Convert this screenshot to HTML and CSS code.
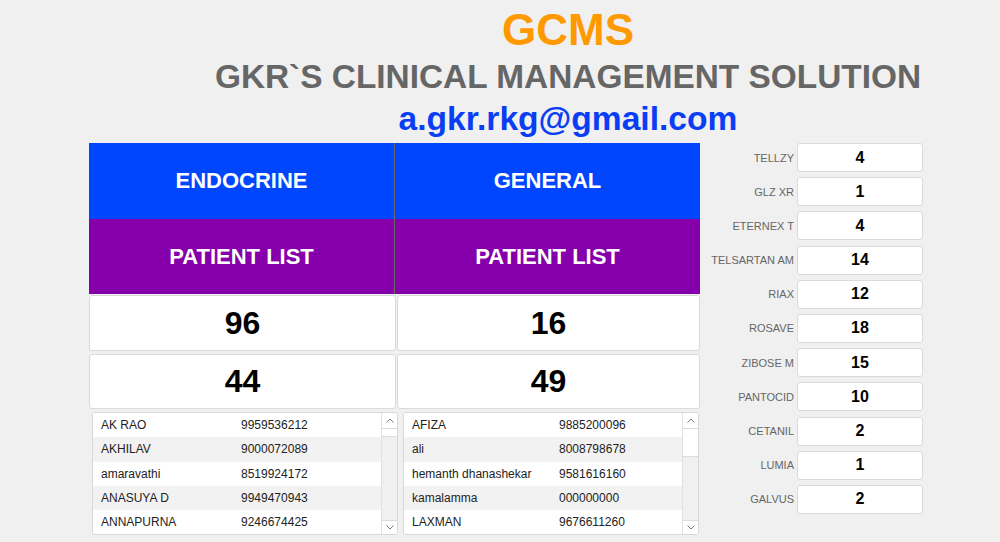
FILE: index.html
```html
<!DOCTYPE html>
<html>
<head>
<meta charset="utf-8">
<title>GCMS</title>
<link rel="stylesheet" href="styles.css">
</head>
<body>
<div class="header">
  <div class="brand">GCMS</div>
  <div class="title">GKR`S CLINICAL MANAGEMENT SOLUTION</div>
  <div class="email">a.gkr.rkg@gmail.com</div>
</div>
<div class="main">
  <div class="left">
    <div class="panel">
      <div class="cell blue">ENDOCRINE</div>
      <div class="cell blue sep">GENERAL</div>
      <div class="cell purple">PATIENT LIST</div>
      <div class="cell purple sep">PATIENT LIST</div>
    </div>
    <div class="counts">
      <div class="count">96</div>
      <div class="count">16</div>
      <div class="count">44</div>
      <div class="count">49</div>
    </div>
    <div class="lists">
      <div class="list list-a">
        <div class="rows">
          <div class="row"><span class="name">AK RAO</span><span>9959536212</span></div>
          <div class="row alt"><span class="name">AKHILAV</span><span>9000072089</span></div>
          <div class="row"><span class="name">amaravathi</span><span>8519924172</span></div>
          <div class="row alt"><span class="name">ANASUYA D</span><span>9949470943</span></div>
          <div class="row"><span class="name">ANNAPURNA</span><span>9246674425</span></div>
        </div>
        <div class="scroll">
          <div class="btn up"><svg width="8" height="5" viewBox="0 0 8 5"><polyline points="0.5,4.5 4,1 7.5,4.5" fill="none" stroke="#7a7a7a" stroke-width="1"/></svg></div>
          <div class="thumb thumb-a"></div>
          <div class="track"></div>
          <div class="btn down"><svg width="8" height="5" viewBox="0 0 8 5"><polyline points="0.5,0.5 4,4 7.5,0.5" fill="none" stroke="#7a7a7a" stroke-width="1"/></svg></div>
        </div>
      </div>
      <div class="list list-b">
        <div class="rows">
          <div class="row"><span class="name">AFIZA</span><span>9885200096</span></div>
          <div class="row alt"><span class="name">ali</span><span>8008798678</span></div>
          <div class="row"><span class="name">hemanth dhanashekar</span><span>9581616160</span></div>
          <div class="row alt"><span class="name">kamalamma</span><span>000000000</span></div>
          <div class="row"><span class="name">LAXMAN</span><span>9676611260</span></div>
        </div>
        <div class="scroll">
          <div class="btn up"><svg width="8" height="5" viewBox="0 0 8 5"><polyline points="0.5,4.5 4,1 7.5,4.5" fill="none" stroke="#7a7a7a" stroke-width="1"/></svg></div>
          <div class="thumb thumb-b"></div>
          <div class="track"></div>
          <div class="btn down"><svg width="8" height="5" viewBox="0 0 8 5"><polyline points="0.5,0.5 4,4 7.5,0.5" fill="none" stroke="#7a7a7a" stroke-width="1"/></svg></div>
        </div>
      </div>
    </div>
  </div>
  <div class="side">
    <div class="label">TELLZY</div><div class="box">4</div>
    <div class="label">GLZ XR</div><div class="box">1</div>
    <div class="label">ETERNEX T</div><div class="box">4</div>
    <div class="label">TELSARTAN AM</div><div class="box">14</div>
    <div class="label">RIAX</div><div class="box">12</div>
    <div class="label">ROSAVE</div><div class="box">18</div>
    <div class="label">ZIBOSE M</div><div class="box">15</div>
    <div class="label">PANTOCID</div><div class="box">10</div>
    <div class="label">CETANIL</div><div class="box">2</div>
    <div class="label">LUMIA</div><div class="box">1</div>
    <div class="label">GALVUS</div><div class="box">2</div>
  </div>
</div>
</body>
</html>
```

FILE: styles.css
```css
* { box-sizing: border-box; }

html, body {
  margin: 0;
  padding: 0;
  background: #f0f0f0;
  font-family: "Liberation Sans", Arial, sans-serif;
  width: 1000px;
  height: 542px;
  overflow: hidden;
}

.header {
  padding: 5px 0 0 136px;
  text-align: center;
  font-weight: bold;
}

.brand {
  font-size: 44px;
  line-height: 50px;
  color: #ff9900;
}

.title {
  font-size: 33.4px;
  line-height: 43px;
  color: #666666;
}

.email {
  font-size: 33.6px;
  line-height: 41px;
  color: #0a3ef5;
}

.main {
  display: flex;
  margin-top: 4px;
  padding-left: 89px;
}

.left {
  width: 611px;
}

.panel {
  display: grid;
  grid-template-columns: 305px 306px;
  grid-template-rows: 76px 75px;
}

.cell {
  display: flex;
  align-items: center;
  justify-content: center;
  color: #ffffff;
  font-weight: bold;
  font-size: 22px;
}

.cell.sep {
  border-left: 1px solid #6a6a6a;
}

.blue { background: #0046ff; }
.purple { background: #8500aa; }

.counts {
  margin-top: 1px;
  display: grid;
  grid-template-columns: 307px 303px;
  grid-template-rows: 56px 55px;
  column-gap: 1px;
  row-gap: 3px;
}

.count {
  background: #ffffff;
  border: 1px solid #dadada;
  border-radius: 3px;
  display: flex;
  align-items: center;
  justify-content: center;
  font-weight: bold;
  font-size: 32px;
  color: #000000;
}

.lists {
  margin-top: 3px;
  display: flex;
}

.list {
  height: 123px;
  background: #ffffff;
  border: 1px solid #d8d8d8;
  border-radius: 3px;
  display: flex;
  overflow: hidden;
}

.list-a { margin-left: 3px; width: 306px; }
.list-b { margin-left: 5px; width: 296px; }

.rows {
  flex: 1;
}

.row {
  height: 24.3px;
  display: flex;
  align-items: center;
  padding-left: 8px;
  font-size: 12px;
  color: #222222;
  background: #ffffff;
}

.row.alt { background: #f2f2f2; }

.list-a .name { width: 140px; }
.list-b .name { width: 147px; }

.scroll {
  width: 16px;
  display: flex;
  flex-direction: column;
  border-left: 1px solid #e2e2e2;
  background: #f0f0f0;
}

.btn {
  background: #ffffff;
  display: flex;
  align-items: center;
  justify-content: center;
}

.btn.up {
  height: 16px;
  border-bottom: 1px solid #dcdcdc;
}

.btn.down {
  height: 14px;
  border-top: 1px solid #dcdcdc;
}

.thumb {
  background: #ffffff;
  border-bottom: 1px solid #dcdcdc;
}

.thumb-a { height: 8px; }
.thumb-b { height: 28px; }

.track { flex: 1; }

.side {
  width: 223px;
  display: grid;
  grid-template-columns: 94px 126px;
  grid-auto-rows: 29px;
  column-gap: 3px;
  row-gap: 5.2px;
}

.label {
  align-self: center;
  text-align: right;
  font-size: 11px;
  color: #666666;
  white-space: nowrap;
}

.box {
  background: #ffffff;
  border: 1px solid #dadada;
  border-radius: 3px;
  display: flex;
  align-items: center;
  justify-content: center;
  font-weight: bold;
  font-size: 16px;
  color: #000000;
}
```
